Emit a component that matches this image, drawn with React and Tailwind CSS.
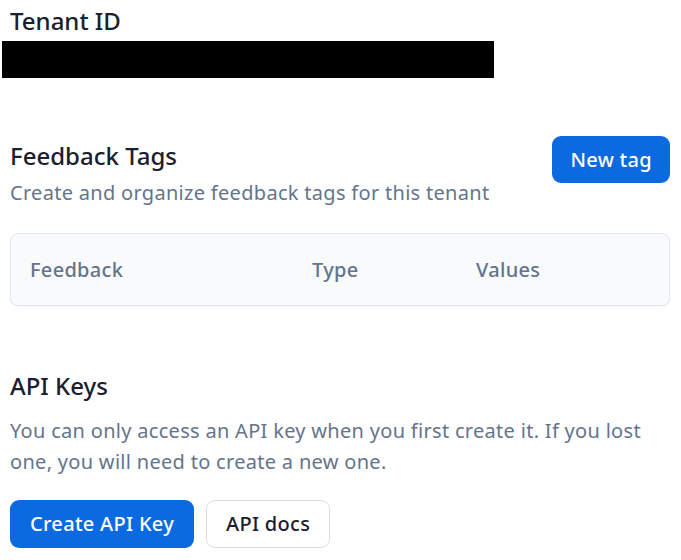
const App = () => {
  return (
    <div className="min-h-screen bg-white font-['Noto_Sans',sans-serif] text-[#1a202c]">
      <section className="px-[10px] pt-[6px]">
        <h2 className="text-[24px] leading-[30px] font-medium">Tenant ID</h2>
        <div className="-ml-[8px] mt-[5px] h-[37px] w-[492px] bg-black" />
      </section>

      <section className="px-[10px] pt-[59px]">
        <div className="flex items-start justify-between">
          <div className="pt-[4px]">
            <h2 className="text-[24px] leading-[30px] font-medium">Feedback Tags</h2>
            <p className="mt-[8px] text-[20px] leading-[28px] tracking-[0.3px] text-[#64748b]">
              Create and organize feedback tags for this tenant
            </p>
          </div>
          <button className="mr-[1px] mt-[-1px] h-[47px] rounded-[9px] bg-[#0b6ae0] px-[18px] text-[20px] font-medium tracking-[0.3px] text-white">
            New tag
          </button>
        </div>

        <div className="mt-[26px] mr-[1px] h-[73px] rounded-[8px] border border-[#e2e8f0] bg-[#f8fafc] shadow-[0_1px_1px_rgba(0,0,0,0.04)]">
          <div className="flex h-full items-center text-[20px] font-medium tracking-[0.3px] text-[#64748b]">
            <span className="w-[301px] pl-[19px]">Feedback</span>
            <span className="w-[164px]">Type</span>
            <span>Values</span>
          </div>
        </div>
      </section>

      <section className="px-[10px] pt-[65px]">
        <h2 className="text-[24px] leading-[30px] font-medium">API Keys</h2>
        <p className="mt-[14px] w-[650px] text-[20px] leading-[31px] tracking-[0.3px] text-[#64748b]">
          You can only access an API key when you first create it. If you lost one, you will need to create a new one.
        </p>
        <div className="mt-[23px] flex gap-[12px]">
          <button className="h-[48px] rounded-[9px] bg-[#0b6ae0] px-[20px] text-[20px] font-medium tracking-[0.3px] text-white">
            Create API Key
          </button>
          <button className="h-[48px] rounded-[9px] border border-[#d9dee5] bg-white px-[19px] text-[20px] font-medium tracking-[0.3px] text-[#1a202c]">
            API docs
          </button>
        </div>
      </section>
    </div>
  );
};

export default App;
